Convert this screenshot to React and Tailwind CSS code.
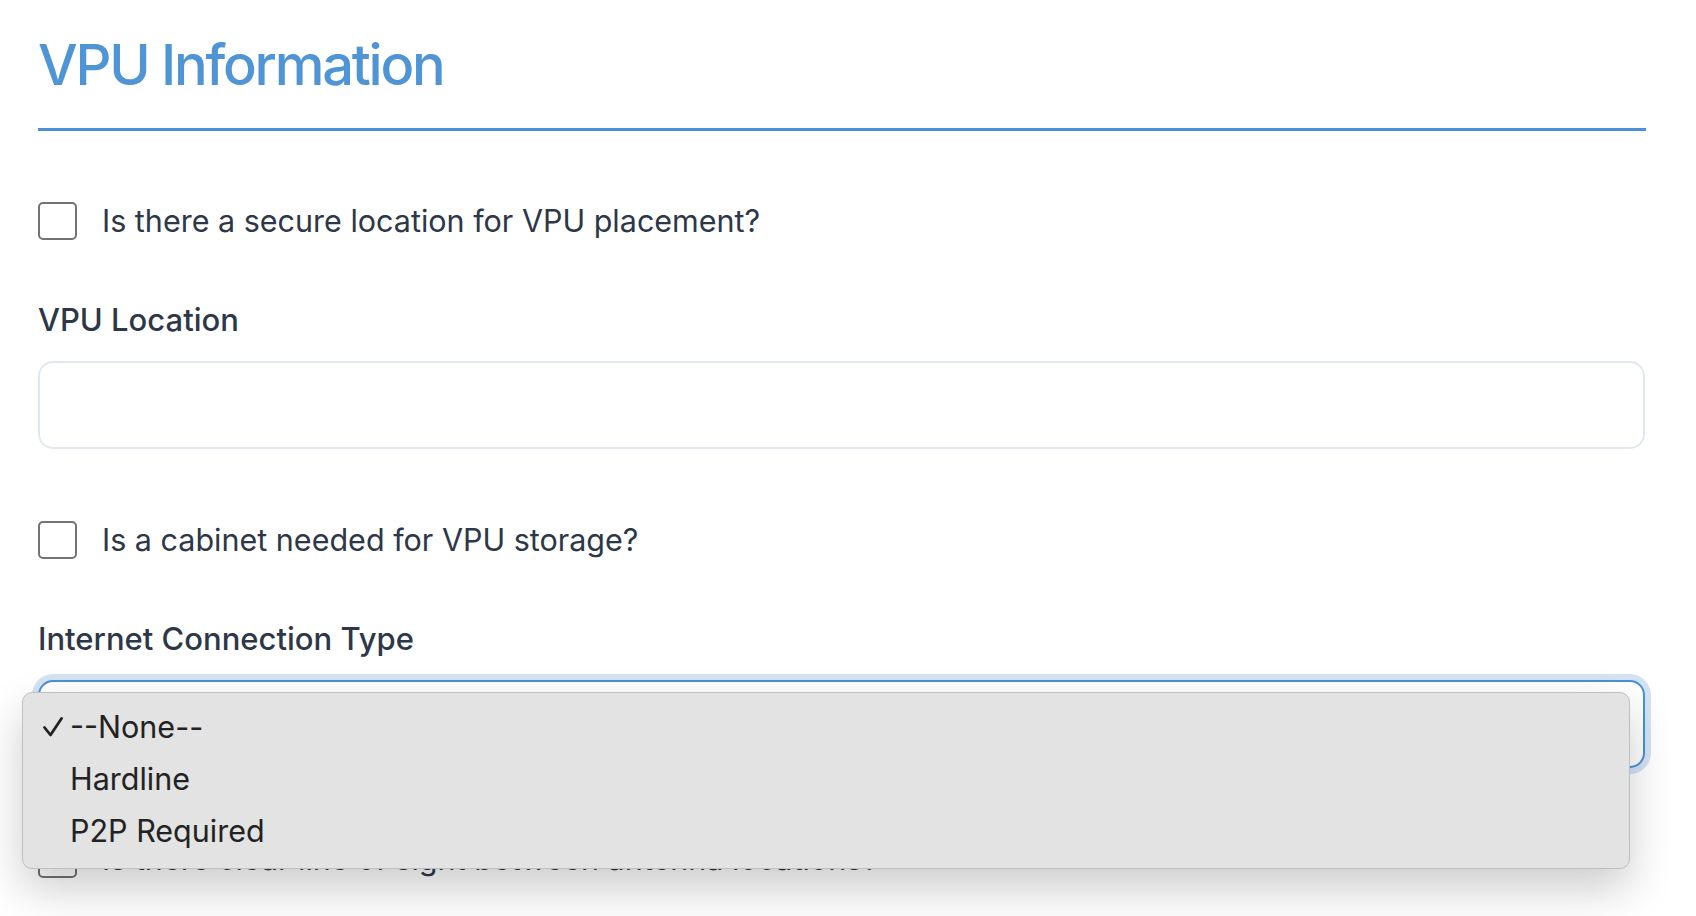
import React from "react";

const font = { fontFamily: "Inter, 'Noto Sans', sans-serif" };

const CheckRow = ({ label }) => (
  <label className="flex items-center gap-[25px] h-[38px]">
    <span className="w-[39px] h-[38px] shrink-0 rounded-[5px] border-2 border-[#737373] bg-white" />
    <span className="text-[30.5px] leading-[36px] text-[#2d3748]">{label}</span>
  </label>
);

const MenuItem = ({ checked, children }) => (
  <div className="flex items-center h-[52px] text-[30.5px] text-[#222]">
    <span className="w-[47px] pl-[20px] flex items-center">
      {checked && (
        <svg width="20" height="20" viewBox="0 0 20 20" fill="none">
          <path d="M1.5 10.5 L7.5 18 L18.5 1.5" stroke="#222" strokeWidth="2.8" strokeLinecap="round" strokeLinejoin="round" />
        </svg>
      )}
    </span>
    <span>{children}</span>
  </div>
);

const App = () => {
  return (
    <div className="min-h-screen bg-white px-[38px] overflow-hidden" style={font}>
      {/* heading */}
      <h1 className="pt-[37px] pb-[35px] border-b-[3px] border-[#4a90d9] text-[56px] leading-[56px] font-medium text-[#4f95d5] tracking-[-0.04em] mr-[12px]">
        VPU Information
      </h1>

      <div className="flex flex-col mr-[13px]">
        <div className="mt-[71px]">
          <CheckRow label="Is there a secure location for VPU placement?" />
        </div>

        <div className="mt-[62px]">
          <p className="text-[31px] leading-[36px] font-medium text-[#2d3748]">VPU Location</p>
          <input className="mt-[23px] w-full h-[88px] rounded-[15px] border-2 border-[#e2e8f0] outline-none px-5 text-[28px]" />
        </div>

        <div className="mt-[72px]">
          <CheckRow label="Is a cabinet needed for VPU storage?" />
        </div>

        <div className="mt-[62px]">
          <p className="text-[31px] leading-[36px] font-medium text-[#2d3748]">Internet Connection Type</p>
          <div className="relative mt-[23px]">
            <div className="w-full h-[88px] rounded-[15px] border-2 border-[#4a8fd8] bg-white shadow-[0_0_0_6px_#d3e3f4]" />
            {/* open native-style menu */}
            <div className="absolute left-[-16px] top-[12px] w-[1608px] h-[177px] rounded-[10px] border border-[#bfbfbf] bg-[#e3e3e3] pt-[8px] pb-[12px] shadow-[0_20px_45px_rgba(0,0,0,0.2)] z-10">
              <MenuItem checked>--None--</MenuItem>
              <MenuItem>Hardline</MenuItem>
              <MenuItem>P2P Required</MenuItem>
            </div>
          </div>
        </div>

        <div className="mt-[72px] pb-[40px]">
          <CheckRow label="Is there clear line of sight between antenna locations?" />
        </div>
      </div>
    </div>
  );
};

export default App;
